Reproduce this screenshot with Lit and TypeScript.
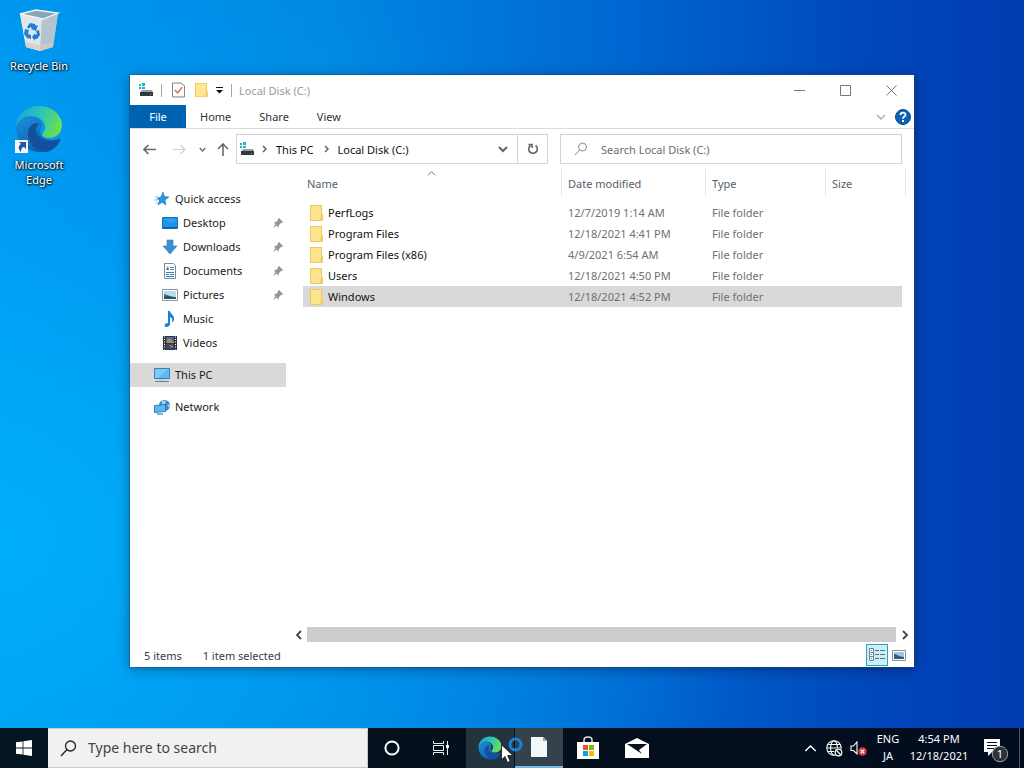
import { LitElement, html, css, svg, nothing } from "lit";
import { customElement, state } from "lit/decorators.js";

const edge = (id: string) => svg`
  <defs>
    <linearGradient id="${id}a" x1="0" y1="0.3" x2="1" y2="0.6">
      <stop offset="0" stop-color="#1aa6dc"/><stop offset="0.5" stop-color="#2fc6b4"/><stop offset="1" stop-color="#6fe04a"/>
    </linearGradient>
    <linearGradient id="${id}b" x1="0" y1="0" x2="0.6" y2="1">
      <stop offset="0" stop-color="#1b90d8"/><stop offset="1" stop-color="#0c5cb4"/>
    </linearGradient>
  </defs>
  <path fill="url(#${id}b)" d="M1 22C1 13 9 10 16 11c7 1 11 5 11 10 0 2-2 3-2 5 0 5 6 9 12 9 3 0 6-1 8-2-3 8-11 14-20 14C12 47 1 37 1 22z"/>
  <path fill="#144f9e" d="M17 20c-4 3-5 8-3 14 3 8 9 13 16 13 6 0 12-5 15-11 1-2 0-3-2-2-3 2-6 3-10 2-8-1-13-7-12-12 0-2 1-4 3-5-2-1-5-1-7 1z"/>
  <path fill="url(#${id}a)" d="M1 22C2 9 12 1 24 1c13 0 23 9 23 19 0 8-6 13-13 13-5 0-7-2-7-3 0-2 3-3 3-8 0-6-6-11-14-11C9 11 3 15 1 22z"/>`;

const drive = html`<svg width="16" height="16" viewBox="0 0 16 16" aria-hidden="true">
  <path fill="#19b5c9" d="M1 2h2v2H1zM4 1h3v3H4zM1 5h2v2H1zM4 5h3v2H4z"/>
  <path fill="#9aa0a2" d="M4 8h10l1 3H2z"/><path fill="#30383a" d="M2 10h13v4H2z"/>
  <path fill="#3fd24a" d="M12 12h1v1h-1z"/></svg>`;

const folder = html`<svg width="14" height="18" viewBox="0 0 14 18" aria-hidden="true">
  <path fill="#e9c865" d="M1 1h12v9h1v7H1z"/><path fill="#ffe48e" d="M2 2h10v14H2z"/>
  <path fill="#f0cd66" d="M12 10h2v7h-3z"/></svg>`;

const picture = html`<svg width="16" height="16" viewBox="0 0 16 16" aria-hidden="true">
  <path fill="#fff" stroke="#8797a3" d="M.5 2.500h15v11H.5z"/><path fill="#b8dcf3" d="M2 4h12v8H2z"/>
  <path fill="#3f7187" d="M2 7c3 0 5 3 12 3v2H2z"/><path fill="#2b4f5b" d="M2 10l4-1 8 2v1H2z"/></svg>`;

const pin = html`<svg class="pin" width="12" height="12" viewBox="0 0 12 12" aria-hidden="true">
  <path fill="#8d969b" d="M7 1l4 4-1 1H9L7 8l-.5 2.500-2-2L1 11l2.500-4L1.500 5.500 4 5l2-2V2z"/></svg>`;

const icons: Record<string, unknown> = {
  star: html`<svg width="16" height="16" viewBox="0 0 16 16" aria-hidden="true">
    <path fill="#2b93df" stroke="#1878c4" stroke-width=".6" d="M9 1l1.300 4.500L15 6l-4 3 1 5-4-2.700L4 14l1.500-4.700L3 7.500 7 6z"/>
    <path stroke="#7cc1ef" d="M1 6h4M0 9h4M2 12h2"/></svg>`,
  desktop: html`<svg width="16" height="16" viewBox="0 0 16 16" aria-hidden="true">
    <path fill="#1b94ec" stroke="#1471b8" d="M.5 2.500h15v11H.5z"/><path fill="#0c5da5" d="M1 12h14v1H1z"/><path fill="#4fb6f8" d="M2 4h13L9 8z" opacity=".4"/></svg>`,
  downloads: html`<svg width="16" height="16" viewBox="0 0 16 16" aria-hidden="true">
    <path fill="#3c8fd2" stroke="#2c78b6" stroke-width=".6" d="M5 1h6v6h4l-7 8-7-8h4z"/></svg>`,
  documents: html`<svg width="16" height="16" viewBox="0 0 16 16" aria-hidden="true">
    <path fill="#fff" stroke="#7f8b93" d="M2.500 .5h9l2 2v13h-11z"/>
    <path stroke="#3a84b8" d="M8 4.500h4M8 6.500h4M4 9.500h8M4 11.500h3M8 11.500h4M4 13.500h8"/><path fill="#2f76ac" d="M4 7l2-4 1 4z"/></svg>`,
  pictures: picture,
  music: html`<svg width="16" height="16" viewBox="0 0 16 16" aria-hidden="true">
    <path fill="#1583d8" d="M6 0h2c0 3 5 4 4 9-1 2-1 2-2 2 1-3 0-4-2-5v7c0 2-2 3-4 3s-2-4 2-4z"/></svg>`,
  videos: html`<svg width="16" height="16" viewBox="0 0 16 16" aria-hidden="true">
    <path fill="#2e3440" d="M1 1h14v14H1z"/><path fill="#4d63a8" d="M4 2h8v6H4z"/><path fill="#3d4a78" d="M4 9h8v5H4z"/>
    <path fill="#b98c46" d="M5 5l3-2 2 3 2 1v1H5zM7 10l4 1-1 2z"/>
    <path stroke="#fff" stroke-dasharray="1 1.500" d="M2.500 1.500v13M13.500 1.500v13"/></svg>`,
  pc: html`<svg width="16" height="16" viewBox="0 0 16 16" aria-hidden="true">
    <path fill="#5bbcf4" stroke="#3e7fae" d="M.5 1.500h15v10H.5z"/><path fill="#9bdcfc" d="M1 2h13L4 11H1z" opacity=".5"/>
    <path fill="#bfc7cc" d="M5 12h6v1H5z"/><path fill="#4a88b3" d="M1 14h14v1H1z"/></svg>`,
  network: html`<svg width="16" height="16" viewBox="0 0 16 16" aria-hidden="true">
    <circle cx="10.500" cy="6.500" r="5.500" fill="#378bc8"/><path fill="#a9d4ee" d="M8 2l4 0-1 3-3 1zM13 6l3-1-1 4z"/>
    <path fill="#57baf2" stroke="#256c9d" stroke-width=".8" d="M.5 6.500l11-1v7l-11 1z"/><path stroke="#256c9d" d="M3 15h6"/></svg>`,
};

const chevron = (d: string, size = 10, w = 1.5) => html`<svg width=${size} height=${size} viewBox="0 0 10 10" aria-hidden="true">
  <path d=${d} fill="none" stroke="currentColor" stroke-width=${w}/></svg>`;
const DOWN = "M1 3l4 4 4-4", UP = "M1 7l4-4 4 4", LEFT = "M7 1L3 5l4 4", RIGHT = "M3 1l4 4-4 4";

interface Place { name: string; icon: string; sub?: boolean; pinned?: boolean; gap?: boolean; current?: boolean }
const places: Place[] = [
  { name: "Quick access", icon: "star" },
  { name: "Desktop", icon: "desktop", sub: true, pinned: true },
  { name: "Downloads", icon: "downloads", sub: true, pinned: true },
  { name: "Documents", icon: "documents", sub: true, pinned: true },
  { name: "Pictures", icon: "pictures", sub: true, pinned: true },
  { name: "Music", icon: "music", sub: true },
  { name: "Videos", icon: "videos", sub: true },
  { name: "This PC", icon: "pc", gap: true, current: true },
  { name: "Network", icon: "network", gap: true },
];

const files = [
  ["PerfLogs", "12/7/2019 1:14 AM"],
  ["Program Files", "12/18/2021 4:41 PM"],
  ["Program Files (x86)", "4/9/2021 6:54 AM"],
  ["Users", "12/18/2021 4:50 PM"],
  ["Windows", "12/18/2021 4:52 PM"],
];

const reset = css`
  * { box-sizing: border-box; }
  svg { display: block; flex: none; }
  button { font: inherit; color: inherit; background: none; border: 0; padding: 0; margin: 0; display: flex; align-items: center; justify-content: center; }
  input { font: inherit; border: 0; padding: 0; background: none; outline: 0; min-width: 0; flex: 1; }
  a { color: inherit; text-decoration: none; }
`;

@customElement("explorer-window")
export class ExplorerWindow extends LitElement {
  @state() private selected = "Windows";

  static styles = [reset, css`
    :host { display: flex; flex-direction: column; background: #fff; color: #1b1b1b; box-shadow: 0 0 0 1px rgba(30, 70, 110, 0.45), 0 2px 12px rgba(0, 0, 30, 0.4); }
    .title { display: flex; align-items: center; height: 30px; padding-left: 8px; color: #999; }
    .title h1 { flex: 1; margin: 0 0 0 7px; font-size: 11px; font-weight: 400; }
    .sep { width: 1px; height: 13px; background: #a5a5a5; }
    .title svg + .sep { margin-left: 7px; }
    .quick { margin-left: 10px; }
    .more { margin: 0 7px 0 6px; }
    .caption { width: 46px; height: 28px; color: #777; }
    .tabs { display: flex; align-items: stretch; height: 24px; border-bottom: 1px solid #dadada; color: #333; }
    .tab { padding: 0 14px; }
    .file { width: 56px; padding: 0; background: #0063b1; color: #fff; }
    .push { flex: 1; }
    .collapse { width: 24px; color: #aaa; }
    .help { width: 20px; margin-right: 1px; }
    .address { display: flex; align-items: center; height: 40px; padding: 0 12px 0 7px; color: #6b6b6b; }
    .nav { width: 24px; height: 24px; }
    .nav.off { color: #cfcfcf; margin-left: 6px; }
    .nav.recent { width: 18px; margin-left: 2px; }
    .box { display: flex; align-items: center; height: 30px; border: 1px solid #d4d4d4; min-width: 0; }
    .path { flex: 1 1 312px; margin-left: 1px; padding-left: 2px; color: #111; }
    .path svg { color: #666; }
    .path .crumb { padding: 0 9px 0 8px; white-space: nowrap; }
    .path .drop { width: 28px; height: 28px; }
    .path .reload { width: 30px; height: 28px; border-left: 1px solid #d4d4d4; }
    .find { flex: 1 1 342px; margin-left: 12px; padding-left: 12px; gap: 12px; color: #8a8a8a; }
    .find input { color: #666; }
    .find input::placeholder { color: #6d6d6d; opacity: 1; }
    .body { display: flex; flex: 1; min-height: 0; }
    nav { width: 156px; flex: none; padding-top: 18px; }
    .place { display: flex; align-items: center; height: 24px; padding-left: 24px; gap: 5px; white-space: nowrap; }
    .place span { padding-bottom: 2px; }
    .place.sub { padding-left: 32px; }
    .place.gap { margin-top: 8px; }
    .place.current { background: #d9d9d9; }
    .pin { margin: 0 2px 0 auto; }
    .pane { flex: 1; display: flex; flex-direction: column; min-width: 0; padding-left: 5px; }
    .list { flex: 1; padding: 0 8px 0 12px; }
    table { width: 100%; table-layout: fixed; border-collapse: separate; border-spacing: 0; }
    th { height: 28px; padding: 0 6px; text-align: left; font-weight: 400; color: #55606c; border-right: 1px solid #e4e8ec; position: relative; }
    th:first-child { padding-left: 4px; }
    .mark { position: absolute; top: 0; left: 50%; margin-left: -5px; color: #666; }
    .date { width: 144px; } .type { width: 120px; } .size { width: 80px; }
    tbody::before { content: ""; display: block; height: 5px; }
    td { height: 21px; padding: 0 6px; color: #707070; white-space: nowrap; }
    td:last-child { border-right: 4px solid transparent; background-clip: padding-box; }
    .name { display: flex; align-items: center; gap: 5px; color: #111; }
    tr.on td { background-color: #d9d9d9; }
    .scroll { display: flex; height: 16px; }
    .scroll button { width: 16px; height: 16px; color: #444; }
    .scroll .right { width: 18px; }
    .thumb { flex: 1; height: 15px; background: #cdcdcd; }
    .status { display: flex; align-items: center; height: 24px; padding-left: 14px; gap: 21px; color: #333c50; }
    .view { width: 22px; height: 22px; }
    .views { display: flex; margin-left: auto; margin-right: 4px; }
    .view.on { background: #cdeef7; border: 1px solid #2da6b4; }
  `];

  render() {
    return html`
      <header class="title">
        ${drive}<span class="sep"></span>
        <button class="quick" aria-label="Properties"><svg width="13" height="16" viewBox="0 0 14 16"><path fill="#fff" stroke="#777" d="M.5 .5h9l4 3v12H.5z"/><path fill="none" stroke="#e0705a" stroke-width="1.600" d="M3 8l3 3 5-6"/></svg></button>
        <button class="quick" aria-label="New folder"><svg width="14" height="16" viewBox="0 0 14 18" preserveAspectRatio="none"><path fill="#ecc95c" d="M0 1h12v9h1v7H0z"/><path fill="#ffe793" d="M1 2h10v14H1z"/><path fill="#f6d36b" d="M11 10h2v7H9z"/></svg></button>
        <button class="more" aria-label="Customize"><svg width="9" height="8" viewBox="0 0 9 8"><path fill="#111" d="M1 1h7v1H1zM1 4h7L4.500 7.500z"/></svg></button>
        <span class="sep"></span>
        <h1>Local Disk (C:)</h1>
        <button class="caption" aria-label="Minimize"><svg width="11" height="11" viewBox="0 0 11 11"><path stroke="currentColor" d="M0 5.500h11"/></svg></button>
        <button class="caption" aria-label="Maximize"><svg width="11" height="11" viewBox="0 0 11 11"><path fill="none" stroke="currentColor" d="M.5 .5h10v10H.5z"/></svg></button>
        <button class="caption" aria-label="Close"><svg width="11" height="11" viewBox="0 0 11 11"><path stroke="currentColor" d="M.5 .5l10 10M10.500 .5l-10 10"/></svg></button>
      </header>
      <div class="tabs">
        <button class="tab file">File</button><button class="tab">Home</button><button class="tab">Share</button><button class="tab">View</button>
        <span class="push"></span>
        <button class="collapse" aria-label="Collapse the ribbon">${chevron(DOWN, 10, 1.3)}</button>
        <button class="help" aria-label="Help"><svg width="16" height="16" viewBox="0 0 16 16"><circle cx="8" cy="8" r="7.500" fill="#0b63b2" stroke="#084a8c"/><path fill="none" stroke="#fff" stroke-width="1.800" d="M5.500 6c0-3.200 5-3.200 5-.2C10.500 7.600 8 7.500 8 9.700"/><path fill="#fff" d="M7 11h2v2H7z"/></svg></button>
      </div>
      <div class="address">
        <button class="nav" aria-label="Back"><svg width="13" height="11" viewBox="0 0 13 11"><path fill="none" stroke="currentColor" stroke-width="1.600" d="M13 5.500H1M5.500 1L1 5.500 5.500 10"/></svg></button>
        <button class="nav off" aria-label="Forward"><svg width="13" height="11" viewBox="0 0 13 11"><path fill="none" stroke="currentColor" stroke-width="1.200" d="M0 5.500h12M7.500 1L12 5.500 7.500 10"/></svg></button>
        <button class="nav recent" aria-label="Recent locations">${chevron(DOWN, 7, 2)}</button>
        <button class="nav" aria-label="Up"><svg width="12" height="13" viewBox="0 0 12 13"><path fill="none" stroke="currentColor" stroke-width="1.600" d="M6 13V1M1 6l5-5 5 5"/></svg></button>
        <div class="box path">
          ${drive}${this.arrow("-6 0 13 8", 13)}
          <a class="crumb" href="#pc">This PC</a>${this.arrow("0 0 7 8", 7)}<a class="crumb" href="#c">Local Disk (C:)</a>
          <span class="push"></span>
          <button class="drop" aria-label="Previous locations">${chevron(DOWN, 10, 2)}</button>
          <button class="reload" aria-label="Refresh"><svg width="12" height="12" viewBox="0 0 12 12"><path fill="none" stroke="currentColor" stroke-width="1.600" d="M8.500 2.500a4.300 4.300 0 1 1-5 0M1.500 1.500h3.500v3.500"/></svg></button>
        </div>
        <label class="box find">
          <svg width="16" height="14" viewBox="0 0 16 14" aria-hidden="true"><circle cx="9.500" cy="5" r="4" fill="none" stroke="currentColor"/><path stroke="currentColor" d="M6.500 8L2 13"/></svg>
          <input type="text" aria-label="Search Local Disk (C:)" placeholder="Search Local Disk (C:)">
        </label>
      </div>
      <div class="body">
        <nav>${places.map(p => html`<a href="#" class="place ${p.sub ? "sub" : ""} ${p.gap ? "gap" : ""} ${p.current ? "current" : ""}">${icons[p.icon]}<span>${p.name}</span>${p.pinned ? pin : nothing}</a>`)}</nav>
        <div class="pane">
          <div class="list">
            <table>
              <thead><tr><th>Name<span class="mark">${chevron(UP, 9, 1)}</span></th><th class="date">Date modified</th><th class="type">Type</th><th class="size">Size</th></tr></thead>
              <tbody>${files.map(([name, date]) => html`
                <tr class=${name === this.selected ? "on" : ""} @click=${() => (this.selected = name)}>
                  <td><span class="name">${folder}${name}</span></td><td>${date}</td><td>File folder</td><td></td>
                </tr>`)}</tbody>
            </table>
          </div>
          <div class="scroll"><button aria-label="Scroll left">${chevron(LEFT, 10, 1.8)}</button><span class="thumb"></span><button class="right" aria-label="Scroll right">${chevron(RIGHT, 10, 1.8)}</button></div>
        </div>
      </div>
      <footer class="status">
        <span>5 items</span><span>1 item selected</span>
        <span class="views">
          <button class="view on" aria-label="Details"><svg width="18" height="14" viewBox="0 0 18 14"><path fill="#fff" stroke="#69809a" d="M1.500 .5h4v4h-4zM1.500 4.500h4v4h-4zM1.500 8.500h4v4h-4z"/><path stroke="#5b6c9a" d="M3 2.500h1M3 6.500h1M3 10.500h1M7 2.500h4M12 2.500h5M7 6.500h4M12 6.500h5M7 10.500h4M12 10.500h5"/></svg></button>
          <button class="view" aria-label="Large icons"><svg width="14" height="11" viewBox="0 0 14 11"><path fill="#fff" stroke="#7f93a3" d="M.5 .5h13v10H.5z"/><path fill="#9fc6e2" d="M2 2h10v7H2z"/><path fill="#3c5c74" d="M2 4c3 0 5 3 10 3v2H2z"/></svg></button>
        </span>
      </footer>`;
  }

  private arrow(box: string, width: number) {
    return html`<svg width=${width} height="8" viewBox=${box} aria-hidden="true"><path fill="none" stroke="currentColor" stroke-width="1.500" d="M2 1l3 3-3 3"/></svg>`;
  }
}

@customElement("task-bar")
export class TaskBar extends LitElement {
  static styles = [reset, css`
    :host { display: flex; height: 40px; background: linear-gradient(90deg, #041522, #04101c 50%, #020c1f); color: #fff; }
    .app { width: 48px; height: 40px; flex: none; margin-right: 1px; }
    .start { width: 48px; }
    .hot { background: #24343f; }
    .open { background: #34424b; border-bottom: 2px solid #76b9ed; }
    .search { display: flex; align-items: center; width: 320px; gap: 11px; padding-left: 12px; background: #f1f1f1; border: 1px solid #c9c9c9; border-left: 0; color: #222; font-size: 14px; }
    .search input { line-height: 20px; }
    .search input::placeholder { color: #444; opacity: 1; }
    .apps { display: flex; flex: 1; }
    .tray { display: flex; align-items: center; }
    .tray button { height: 40px; }
    .small { width: 24px; }
    .tray .lines { flex-direction: column; line-height: 17px; padding-bottom: 2px; }
    .lang { width: 36px; }
    .clock { width: 66px; }
    .note { width: 47px; }
    .peek { width: 5px; height: 40px; border-left: 1px solid #4a5662; }
  `];

  render() {
    return html`
      <button class="start" aria-label="Start"><svg width="16" height="16" viewBox="0 0 16 16"><path fill="#fff" d="M0 2.300L6.600 1.400v6.200H0zM7.400 1.300L16 0v7.600H7.400zM0 8.400h6.600v6.200L0 13.700zM7.400 8.400H16V16l-8.600-1.200z"/></svg></button>
      <label class="search">
        <svg width="17" height="17" viewBox="0 0 17 17" aria-hidden="true"><circle cx="10.500" cy="6" r="5" fill="none" stroke="currentColor" stroke-width="1.300"/><path stroke="currentColor" stroke-width="1.300" d="M7 9.500L1 16"/></svg>
        <input type="text" aria-label="Type here to search" placeholder="Type here to search">
      </label>
      <div class="apps">
        <button class="app" aria-label="Cortana"><svg width="16" height="16" viewBox="0 0 16 16"><circle cx="8" cy="8" r="6.600" fill="none" stroke="#fff" stroke-width="2"/></svg></button>
        <button class="app" aria-label="Task View"><svg width="18" height="16" viewBox="0 0 18 16"><path fill="none" stroke="#e8eef2" d="M1.500 1v2.500h10V1M1.500 5.500h10v5h-10zM1.500 15v-2.500h10V15M15.500 1v14"/><path fill="#fff" d="M14 5h3v3h-3z"/></svg></button>
        <button class="app hot" aria-label="Microsoft Edge"><svg width="24" height="24" viewBox="0 0 48 48">${edge("t")}</svg></button>
        <button class="app open" aria-label="Document"><svg width="16" height="20" viewBox="0 0 16 20"><path fill="#f3f7f7" d="M0 0h12l4 4v16H0z"/><path fill="#9aa6aa" d="M12 0v4h4z"/></svg></button>
        <button class="app" aria-label="Microsoft Store"><svg width="24" height="24" viewBox="0 0 24 24"><path fill="none" stroke="#dfe5e8" stroke-width="1.500" d="M8 7V4c0-4 8-4 8 0v3"/><path fill="#fff" d="M1 6h22v17H1z"/><path fill="#f25022" d="M7 9h5v5H7z"/><path fill="#7fba00" d="M13 9h5v5h-5z"/><path fill="#00a4ef" d="M7 15h5v5H7z"/><path fill="#ffb900" d="M13 15h5v5h-5z"/></svg></button>
        <button class="app" aria-label="Mail"><svg width="24" height="20" viewBox="0 0 24 20"><path fill="#fff" d="M0 6l12-6 12 6v14H0z"/><path fill="#06131f" d="M2 6h20l-8 6 3 4-6-4z"/></svg></button>
      </div>
      <div class="tray">
        <button class="small" aria-label="Show hidden icons">${chevron(UP, 13, 1.1)}</button>
        <button class="small" aria-label="No network"><svg width="17" height="17" viewBox="0 0 17 17"><g fill="none" stroke="#fff" stroke-width="1.100"><circle cx="8" cy="8" r="7.200"/><ellipse cx="8" cy="8" rx="3.400" ry="7.200"/><path d="M1 8h14M2 4.500h12M2 11.500h12"/></g><circle cx="12.500" cy="12.500" r="4.500" fill="#04101c"/><circle cx="12.500" cy="12.500" r="3.300" fill="none" stroke="#fff" stroke-width="1.200"/><path stroke="#fff" stroke-width="1.200" d="M10.500 10.500l4 4"/></svg></button>
        <button class="small" aria-label="Muted"><svg width="17" height="15" viewBox="0 0 17 15"><path fill="none" stroke="#fff" stroke-width="1.100" d="M1 5h2.500L7 1v12L3.500 9.500H1z"/><circle cx="12.500" cy="10.500" r="4.300" fill="#d8343f"/><path stroke="#fff" stroke-width="1.200" d="M10.700 8.700l3.600 3.600M14.300 8.700l-3.600 3.600"/></svg></button>
        <button class="lines lang"><span>ENG</span><span>JA</span></button>
        <button class="lines clock"><span>4:54 PM</span><span>12/18/2021</span></button>
        <button class="note" aria-label="1 notification"><svg width="26" height="30" viewBox="0 -4 26 30"><path fill="#fff" d="M1 2h16v13H9l-4 4v-4H1z"/><path stroke="#06131f" d="M4 5.500h10M4 8.500h10M4 11.500h7"/><circle cx="17" cy="17" r="7.700" fill="#2b3239" stroke="#9aa0a5"/><text x="17" y="21" font-size="11" text-anchor="middle" fill="#fff">1</text></svg></button>
        <span class="peek"></span>
      </div>`;
  }
}

@customElement("app-root")
export class AppRoot extends LitElement {
  static styles = [reset, css`
    :host {
      display: flex; flex-direction: column; height: 100vh; overflow: hidden; position: relative;
      font-family: "Noto Sans", "Open Sans", sans-serif; font-size: 11px; line-height: 15px;
      background:
        radial-gradient(ellipse 75% 80% at 0% 70%, rgba(0, 184, 255, 0.75), rgba(0, 170, 250, 0.4) 50%, rgba(0, 120, 230, 0) 100%),
        linear-gradient(90deg, #0095ee 0%, #0088e2 32%, #0068d2 60%, #0048bc 84%, #003cb0 100%);
    }
    .desk { display: flex; flex-direction: column; flex: 1; width: 78px; padding-top: 8px; gap: 30px; }
    .item { display: flex; flex-direction: column; align-items: center; text-align: center; color: #fff; text-shadow: 1px 1px 2px #000, 0 0 3px #000; }
    .item span { padding: 0 8px; }
    .bin span { padding: 0; margin-top: 2px; }
    explorer-window { position: absolute; inset: 75px 110px 101px 130px; }
    .pointer { position: absolute; left: 501px; bottom: 4px; }
    .busy { position: absolute; left: 508px; bottom: 16px; }
  `];

  render() {
    return html`
      <div class="desk">
        <a class="item bin" href="#"><svg width="48" height="48" viewBox="0 0 48 48" aria-hidden="true">
          <path fill="#c9d3da" d="M5 6l23 5 15-6-5 34-13 4-14-4z"/><path fill="#dfe7eb" d="M5 6l22 5-2 32-14-4z"/>
          <path fill="#b4c3cd" d="M27 11l16-6-5 34-13 4z"/><path fill="#8aa5b4" stroke="#eef6fa" stroke-width="1.300" d="M5 6l16-4 22 3-15 6z"/>
          <path fill="#d8c9c4" d="M11 34l14 3 13-2-1 4-12 4-14-4z" opacity=".7"/>
          <g fill="#1f7fd0"><path d="M12 19l3-4 5 1 1 2 2-1-2 6-5-2 1-1-2-1-1 2z"/><path d="M10 21l4 1-1 4 3 1v4l-4-1-3-4z"/><path d="M24 22l1 5-3 4h-2v2l-3-4 3-4v2l2-1-1-3z"/></g></svg>
          <span>Recycle Bin</span></a>
        <a class="item" href="#"><svg width="52" height="54" viewBox="0 0 52 54" aria-hidden="true">
          <svg x="1" y="2" width="50" height="48" viewBox="0 0 48 48">${edge("d")}</svg>
          <path fill="#f4f7fa" d="M2 37h13v13H2z"/><path fill="#24589e" d="M6 39h7v7l-2-2c-2 0-3 2-3 5-3-3-3-6 0-8z"/></svg>
          <span>Microsoft Edge</span></a>
      </div>
      <explorer-window></explorer-window>
      <task-bar></task-bar>
      <svg class="busy" width="15" height="15" viewBox="0 0 15 15" aria-hidden="true"><circle cx="7.500" cy="7.500" r="5.500" fill="none" stroke="#1784dc" stroke-width="3"/></svg>
      <svg class="pointer" width="13" height="20" viewBox="0 0 13 20" aria-hidden="true"><path fill="#fff" stroke="#111" stroke-width=".8" d="M.5 .8v15l3.500-3.300 2.500 6 2.700-1.200-2.500-5.700H12z"/></svg>`;
  }
}
